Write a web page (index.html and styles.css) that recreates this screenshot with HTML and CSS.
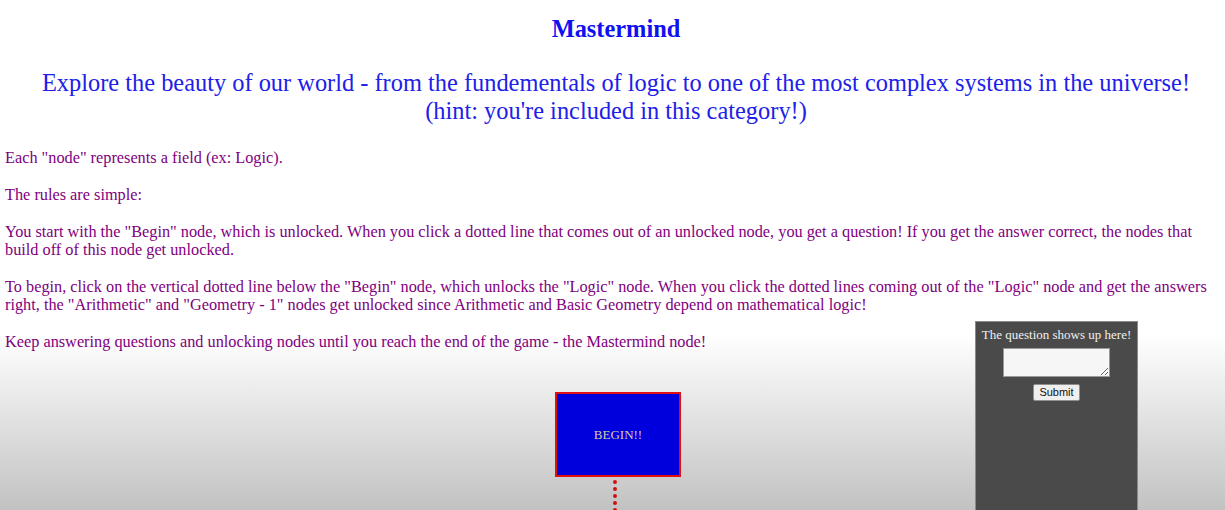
FILE: index.html
```html
<!DOCTYPE html>
<html lang="en">
<head>
<meta charset="utf-8">
<title>Mastermind</title>
<link rel="stylesheet" href="styles.css">
</head>
<body>
<header class="intro">
  <h1 class="title">Mastermind</h1>
  <p class="tagline">Explore the beauty of our world - from the fundementals of logic to one of the most complex systems in the universe!<br>(hint: you're included in this category!)</p>
</header>
<section class="rules">
  <p>Each "node" represents a field (ex: Logic).</p>
  <p>The rules are simple:</p>
  <p>You start with the "Begin" node, which is unlocked. When you click a dotted line that comes out of an unlocked node, you get a question! If you get the answer correct, the nodes that build off of this node get unlocked.</p>
  <p>To begin, click on the vertical dotted line below the "Begin" node, which unlocks the "Logic" node. When you click the dotted lines coming out of the "Logic" node and get the answers right, the "Arithmetic" and "Geometry - 1" nodes get unlocked since Arithmetic and Basic Geometry depend on mathematical logic!</p>
  <p>Keep answering questions and unlocking nodes until you reach the end of the game - the Mastermind node!</p>
</section>
<section class="board">
  <div class="node node-begin">BEGIN!!</div>
  <div class="link link-begin"></div>
</section>
<aside class="question-panel">
  <p class="question-text">The question shows up here!</p>
  <textarea class="answer"></textarea>
  <button class="submit" type="button">Submit</button>
</aside>
</body>
</html>
```

FILE: styles.css
```css
html {
  height: 100%;
  background: linear-gradient(to bottom, #ffffff 0, #ffffff 335px, #c2c2c2 510px) no-repeat;
  background-color: #c2c2c2;
  overflow: hidden;
}
body {
  margin: 0;
  padding: 0 10px 0 5px;
  font-family: "Liberation Serif", "Times New Roman", serif;
  font-size: 16.3px;
  color: #800080;
}
.intro {
  text-align: center;
  margin-right: -12px;
}
.title {
  margin: 15px 0 0;
  font-size: 24.4px;
  line-height: 28px;
  font-weight: bold;
  color: #1010f0;
}
.tagline {
  margin: 26px 0 0;
  font-size: 24.4px;
  line-height: 28px;
  color: #2020e8;
}
.rules {
  margin-top: 24px;
}
.rules p {
  margin: 0 0 19px;
  line-height: 18px;
}
.board {
  position: relative;
  height: 141px;
}
.node {
  position: absolute;
  box-sizing: border-box;
  display: flex;
  align-items: center;
  justify-content: center;
  font-size: 13px;
}
.node-begin {
  left: 550px;
  top: 22px;
  width: 126px;
  height: 85px;
  background: #0000dd;
  border: 2px solid #e01010;
  color: #d9cc9e;
}
.link {
  position: absolute;
}
.link-begin {
  left: 608px;
  top: 110px;
  height: 32px;
  border-left: 4px dotted #d01010;
}
.question-panel {
  position: fixed;
  top: 321px;
  bottom: 0;
  left: 975px;
  width: 163px;
  box-sizing: border-box;
  background: #4a4a4a;
  border: 1px solid #8a8a8a;
  border-bottom: 0;
  display: flex;
  flex-direction: column;
  align-items: center;
}
.question-text {
  margin: 5px 0 0;
  font-family: "Liberation Serif", "Times New Roman", serif;
  font-size: 13px;
  line-height: 15px;
  color: #f0f0f0;
}
.answer {
  margin: 6px 0 0;
  width: 107px;
  height: 29px;
  box-sizing: border-box;
  background: #f6f6f6;
  border: 1px solid #9a9a9a;
  padding: 2px;
  resize: both;
}
.submit {
  margin: 7px 0 0;
  width: 47px;
  height: 17px;
  padding: 0;
  font-family: "Liberation Sans", Arial, sans-serif;
  font-size: 11px;
  line-height: 15px;
  color: #111;
  background: #efefef;
  border: 1px solid #8f8f8f;
  border-radius: 2px;
}
```
